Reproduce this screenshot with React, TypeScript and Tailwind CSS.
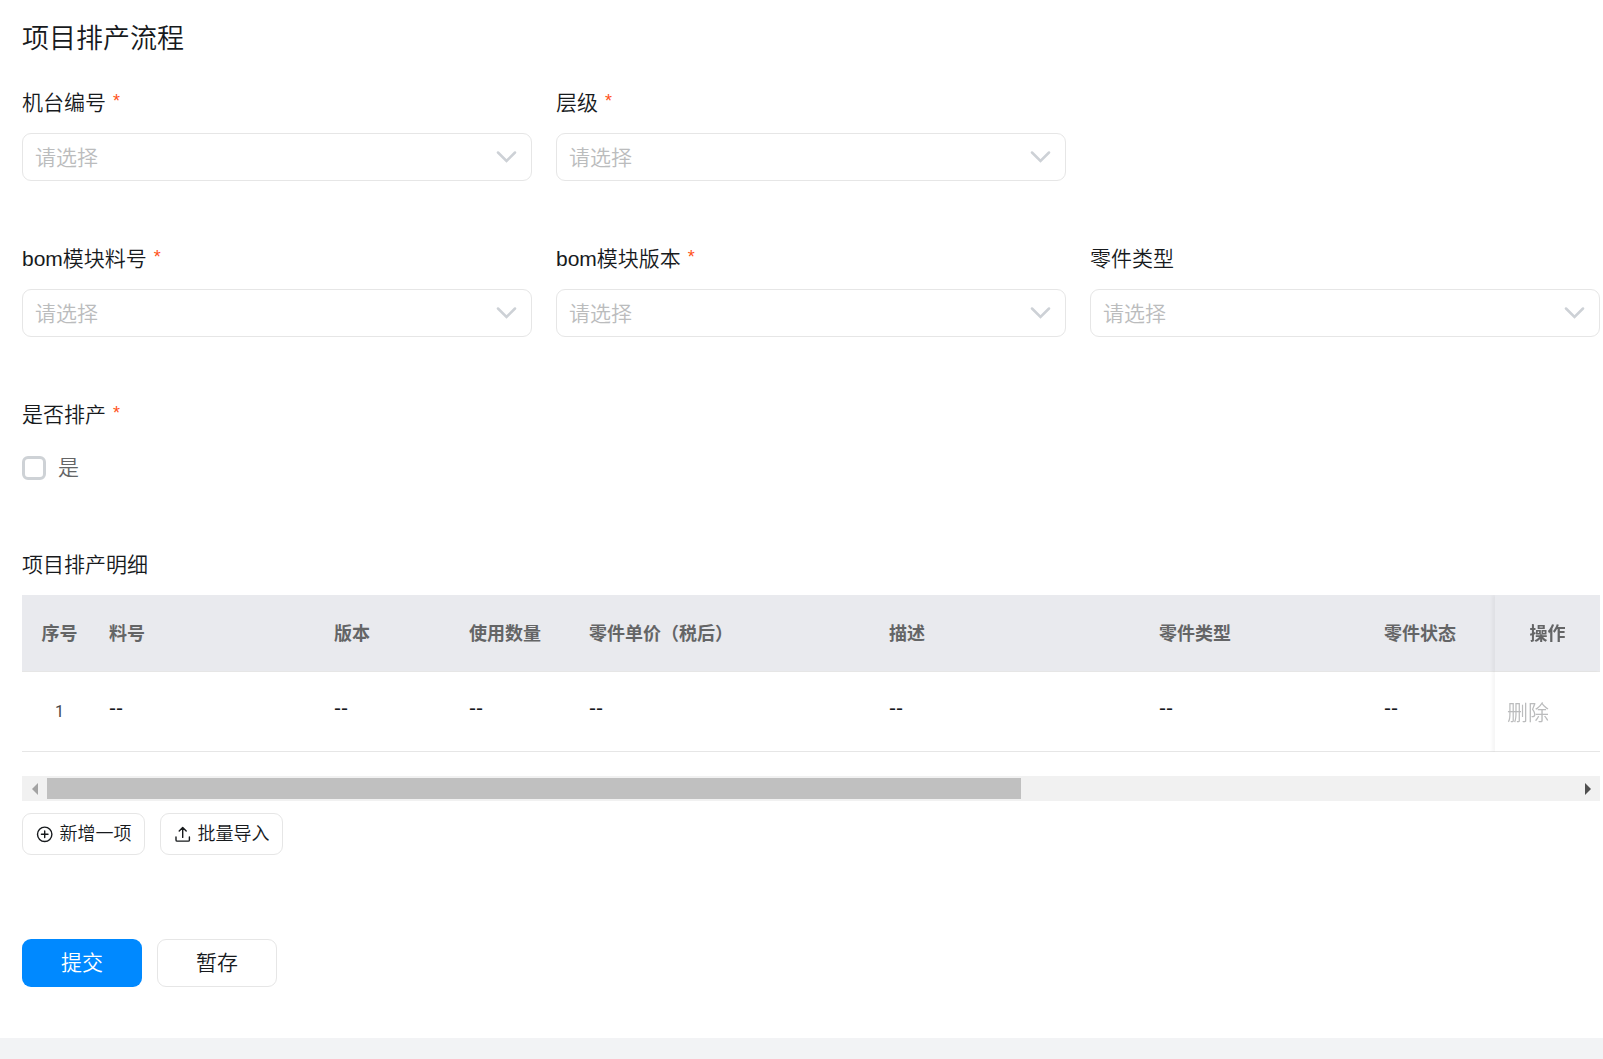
import { useRef, useState } from "react";

interface Column {
  title: string;
  width: string;
}

const columns: Column[] = [
  { title: "料号", width: "w-[225px]" },
  { title: "版本", width: "w-[135px]" },
  { title: "使用数量", width: "w-[120px]" },
  { title: "零件单价（税后）", width: "w-[300px]" },
  { title: "描述", width: "w-[270px]" },
  { title: "零件类型", width: "w-[225px]" },
  { title: "零件状态", width: "w-[225px]" },
];

function Required() {
  return <span className="ml-[7px] text-[#ff5219] text-[18px] leading-[28px]">*</span>;
}

function SelectField({ id, label, required = false }: { id: string; label: string; required?: boolean }) {
  return (
    <div>
      <label htmlFor={id} className="flex h-8 mb-3.5 leading-8">
        {label}
        {required && <Required />}
      </label>
      <div className="relative">
        <select
          id={id}
          defaultValue=""
          className="block w-full h-12 pt-0.5 pl-3 pr-12 appearance-none rounded-[9px] border border-[#e6e6e6] bg-white text-[#bbbcbd]"
        >
          <option value="">请选择</option>
        </select>
        <svg
          className="absolute right-3.5 top-[18px] w-[23px] h-3 pointer-events-none"
          viewBox="0 0 23 12"
          fill="none"
          stroke="#cdd1d6"
          strokeWidth="2.5"
          strokeLinecap="round"
        >
          <path d="M3 1.5 11.5 10 20 1.5" />
        </svg>
      </div>
    </div>
  );
}

function DetailTable() {
  const scroller = useRef<HTMLDivElement>(null);
  const [offset, setOffset] = useState(0);

  const scroll = (left: number) => scroller.current?.scrollBy({ left, behavior: "smooth" });

  return (
    <div>
      <div
        ref={scroller}
        className="overflow-x-hidden"
        onScroll={(e) => setOffset((e.currentTarget.scrollLeft / e.currentTarget.scrollWidth) * 100)}
      >
        <table className="w-[2475px] table-fixed border-separate border-spacing-0">
          <thead>
            <tr className="h-[77px] text-left text-[18px] text-[#646566]">
              <th className="w-[75px] pt-0.5 border-b border-[#e6e6e6] bg-[#e9eaee] text-center">序号</th>
              {columns.map((column) => (
                <th key={column.title} className={`${column.width} px-3 pt-0.5 border-b border-[#e6e6e6] bg-[#e9eaee]`}>
                  {column.title}
                </th>
              ))}
              <td className="border-b border-[#e6e6e6] bg-[#e9eaee]" />
              <th className="sticky right-0 w-[105px] pt-0.5 border-b border-[#e6e6e6] bg-[#e9eaee] text-center shadow-[-3px_0_3px_rgba(0,0,0,0.04)]">
                操作
              </th>
            </tr>
          </thead>
          <tbody>
            <tr className="h-20">
              <td className="border-b border-[#e6e6e6] text-center text-[16px] font-normal text-[#464748] font-['Roboto',sans-serif]">1</td>
              {columns.map((column) => (
                <td key={column.title} className="px-3 pb-2 border-b border-[#e6e6e6]">
                  --
                </td>
              ))}
              <td className="border-b border-[#e6e6e6]" />
              <td className="sticky right-0 px-3 pt-0.5 border-b border-[#e6e6e6] bg-white shadow-[-3px_0_3px_rgba(0,0,0,0.04)]">
                <button type="button" disabled className="text-[#bbbcbd]">
                  删除
                </button>
              </td>
            </tr>
          </tbody>
        </table>
      </div>

      {/* Horizontal scrollbar */}
      <div className="mt-6 flex h-[25px] bg-[#f1f1f1]">
        <button type="button" aria-label="向左滚动" onClick={() => scroll(-300)} className="flex w-[25px] items-center justify-center">
          <svg className="w-[6px] h-3" viewBox="0 0 6 12" fill="#a3a3a3">
            <path d="M6 0v12L0 6z" />
          </svg>
        </button>
        <div className="flex-1 py-0.5">
          <div className="h-full w-[63.75%] bg-[#c0c0c0]" style={{ marginLeft: `${offset}%` }} />
        </div>
        <button type="button" aria-label="向右滚动" onClick={() => scroll(300)} className="flex w-[25px] items-center justify-center">
          <svg className="w-[6px] h-3" viewBox="0 0 6 12" fill="#505050">
            <path d="M0 0v12l6-6z" />
          </svg>
        </button>
      </div>
    </div>
  );
}

export default function App() {
  return (
    <div className="min-h-screen bg-[#f2f3f5] text-[21px] font-[350] text-[#171a1d] font-['Liberation_Sans','Noto_Sans_CJK_SC',sans-serif]">
      <form className="bg-white pt-[21px] pl-[22px] pr-[3px] pb-[51px]" onSubmit={(e) => e.preventDefault()}>
        <h1 className="mb-[30px] text-[27px] leading-9">项目排产流程</h1>

        <div className="grid grid-cols-3 gap-x-6 mb-[62px]">
          <SelectField id="machine" label="机台编号" required />
          <SelectField id="level" label="层级" required />
        </div>

        <div className="grid grid-cols-3 gap-x-6 mb-[62px]">
          <SelectField id="bom-no" label="bom模块料号" required />
          <SelectField id="bom-version" label="bom模块版本" required />
          <SelectField id="part-type" label="零件类型" />
        </div>

        <fieldset className="mb-[58px]">
          <legend className="flex h-8 mb-3.5 leading-8">
            是否排产
            <Required />
          </legend>
          <label className="flex h-[46px] items-center gap-3 text-[#646566]">
            <input
              type="checkbox"
              className="w-6 h-6 appearance-none rounded-md border-3 border-[#ced2d6] bg-white checked:border-[#0089ff] checked:bg-[#0089ff]"
            />
            是
          </label>
        </fieldset>

        <h2 className="mb-3.5 leading-8">项目排产明细</h2>
        <DetailTable />

        <div className="mt-3 flex gap-[15px] text-[18px]">
          <button type="button" className="flex h-[42px] w-[123px] items-center justify-center gap-1.5 rounded-[9px] border border-[#e6e6e6]">
            <svg className="w-[18px] h-[18px]" viewBox="0 0 18 18" fill="none" stroke="currentColor" strokeWidth="1.4" strokeLinecap="round">
              <circle cx="8.7" cy="9.3" r="7.2" />
              <path d="M8.7 6v6.6M5.4 9.3h6.6" />
            </svg>
            新增一项
          </button>
          <button type="button" className="flex h-[42px] w-[123px] items-center justify-center gap-1.5 rounded-[9px] border border-[#e6e6e6]">
            <svg className="w-[18px] h-[18px]" viewBox="0 0 18 18" fill="none" stroke="currentColor" strokeWidth="1.4" strokeLinecap="round" strokeLinejoin="round">
              <path d="M8.7 12.4V2.6M5.2 6l3.500-3.500L12.200 6M2 12v2.900q0 1.200 1.200 1.200h11q1.200 0 1.200-1.200V12" />
            </svg>
            批量导入
          </button>
        </div>

        <div className="mt-[84px] flex gap-[15px]">
          <button type="submit" className="h-12 w-[120px] rounded-[9px] bg-[#0089ff] text-white">
            提交
          </button>
          <button type="button" className="h-12 w-[120px] rounded-[9px] border border-[#e6e6e6] bg-white">
            暂存
          </button>
        </div>
      </form>
    </div>
  );
}
